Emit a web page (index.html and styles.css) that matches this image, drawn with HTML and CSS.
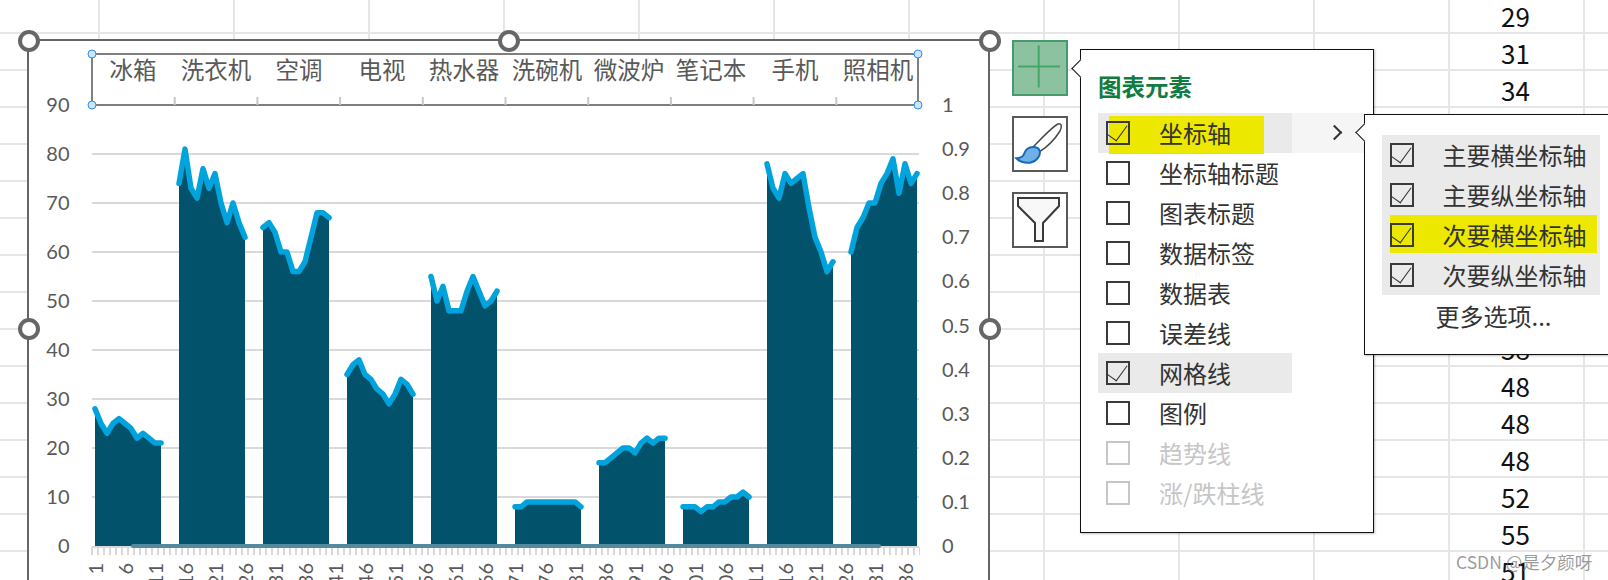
FILE: index.html
```html
<!DOCTYPE html>
<html lang="zh-CN">
<head>
  <meta charset="UTF-8">
  <title>图表元素</title>
  <link rel="stylesheet" href="styles.css">
</head>
<body>
  <div class="sheet">
    <div class="num-col">
      <div class="num">29</div>
      <div class="num">31</div>
      <div class="num">34</div>
      <div class="num"></div>
      <div class="num"></div>
      <div class="num"></div>
      <div class="num"></div>
      <div class="num"></div>
      <div class="num"></div>
      <div class="num">58</div>
      <div class="num">48</div>
      <div class="num">48</div>
      <div class="num">48</div>
      <div class="num">52</div>
      <div class="num">55</div>
      <div class="num">51</div>
    </div>

    <!-- 图表 -->
    <div class="chart">
      <svg id="plot" class="plot" viewBox="29 41 959 539" width="959" height="539"></svg>
      <span class="handle h-tl"></span>
      <span class="handle h-tc"></span>
      <span class="handle h-tr"></span>
      <span class="handle h-ml"></span>
      <span class="handle h-mr"></span>
    </div>

    <!-- 右侧三个按钮 -->
    <div class="tools">
      <div class="tool tool-on">
        <svg width="52" height="52" viewBox="0 0 52 52"><path class="plus" d="M4 24.5H46M24.7 3.5V45.5"/></svg>
      </div>
      <div class="tool">
        <svg width="52" height="52" viewBox="0 0 52 52">
          <path class="brush-stick" d="M19 29C28 20 38 9 44 6C48 5 48 9 46 13C41 21 33 29 25.7 33.7"/>
          <path class="brush-hair" d="M19 29C13 29 11 33 10 36C9 39 6 40 2.3 40.3C6 44 12 45 16 44.7C22 44 27 38 25.7 33C25 30 22 29 19 29Z"/>
        </svg>
      </div>
      <div class="tool">
        <svg width="52" height="52" viewBox="0 0 52 52"><path class="funnel" d="M4 4H45V12L29 29V47H21V29L4 12Z"/></svg>
      </div>
    </div>

    <!-- 图表元素菜单 -->
    <div class="popup menu">
      <span class="notch notch-menu"></span>
      <h2 class="menu-title">图表元素</h2>
      <ul class="items">
        <li class="item hover">
          <span class="mark mark-main"></span>
          <span class="box checked"></span><span class="label">坐标轴</span>
          <span class="more"></span>
        </li>
        <li class="item"><span class="box"></span><span class="label">坐标轴标题</span></li>
        <li class="item"><span class="box"></span><span class="label">图表标题</span></li>
        <li class="item"><span class="box"></span><span class="label">数据标签</span></li>
        <li class="item"><span class="box"></span><span class="label">数据表</span></li>
        <li class="item"><span class="box"></span><span class="label">误差线</span></li>
        <li class="item selected"><span class="box checked"></span><span class="label">网格线</span></li>
        <li class="item"><span class="box"></span><span class="label">图例</span></li>
        <li class="item disabled"><span class="box"></span><span class="label">趋势线</span></li>
        <li class="item disabled"><span class="box"></span><span class="label">涨/跌柱线</span></li>
      </ul>
    </div>

    <!-- 坐标轴子菜单 -->
    <div class="popup submenu">
      <span class="notch notch-sub"></span>
      <ul class="subitems">
        <li class="subitem"><span class="box checked"></span><span class="label">主要横坐标轴</span></li>
        <li class="subitem"><span class="box checked"></span><span class="label">主要纵坐标轴</span></li>
        <li class="subitem">
          <span class="mark mark-sub"></span>
          <span class="box checked"></span><span class="label">次要横坐标轴</span>
        </li>
        <li class="subitem"><span class="box checked"></span><span class="label">次要纵坐标轴</span></li>
      </ul>
      <div class="more-options">更多选项...</div>
    </div>

    <div class="watermark">CSDN @是夕颜呀</div>
  </div>
  <script src="chart.js"></script>
</body>
</html>
```

FILE: styles.css
```css
* {
  box-sizing: border-box;
}

body {
  margin: 0;
  background: #fff;
  font-family: "Noto Sans CJK SC", "Liberation Sans", sans-serif;
}

.sheet {
  position: relative;
  width: 1608px;
  height: 580px;
  overflow: hidden;
  padding-left: 1448px;
  background-color: #fff;
  background-image:
    linear-gradient(to right, #e6e6e6 2px, transparent 2px),
    linear-gradient(to bottom, #e6e6e6 2px, transparent 2px);
  background-size: 135px 37px;
  background-position: 98px 0, 0 32px;
}

/* 单元格里的数字 */
.num-col {
  width: 135px;
  margin-top: -5px;
}

.num {
  height: 37px;
  padding-top: 2px;
  font-family: "Noto Sans CJK SC", "Liberation Sans", sans-serif;
  font-size: 26px;
  line-height: 37px;
  text-align: center;
  color: #111;
}

/* 图表 */
.chart {
  position: absolute;
  left: 27px;
  top: 39px;
  width: 963px;
  height: 600px;
  border: 2px solid #666;
  background: #fff;
}

.plot {
  display: block;
}

.handle {
  position: absolute;
  width: 22px;
  height: 22px;
  border: 4.5px solid #666;
  border-radius: 50%;
  background: #fff;
}

.h-tl { left: -11px; top: -11px; }
.h-tc { left: 469px; top: -11px; }
.h-tr { left: 950px; top: -11px; }
.h-ml { left: -11px; top: 277px; }
.h-mr { left: 950px; top: 277px; }

.grid-line {
  stroke: #d9d9d9;
  stroke-width: 2;
}

.area {
  fill: #02526c;
}

.line {
  fill: none;
  stroke: #00a3dc;
  stroke-width: 5.5;
  stroke-linecap: round;
  stroke-linejoin: round;
}

.axis-num {
  font-family: Lato, "Liberation Sans", sans-serif;
  font-size: 20px;
  fill: #595959;
}

.axis-cat {
  font-family: "Noto Sans CJK SC", sans-serif;
  font-size: 23.5px;
  fill: #595959;
  text-anchor: middle;
}

.top-axis {
  fill: none;
  stroke: #7f7f7f;
  stroke-width: 2;
}

.top-tick {
  stroke: #c8c8c8;
  stroke-width: 2;
}

.low-axis {
  stroke: #d9d9d9;
  stroke-width: 2;
}

.low-ticks {
  stroke: #d9d9d9;
  stroke-width: 8;
  stroke-dasharray: 2 4;
}

.sec-axis {
  stroke: #54899f;
  stroke-width: 4;
  stroke-linecap: round;
}

.dot {
  fill: #cfe5f9;
  stroke: #2a8fe6;
  stroke-width: 1;
}

/* 右侧按钮 */
.tools {
  position: absolute;
  left: 1012px;
  top: 40px;
  display: flex;
  flex-direction: column;
  gap: 20px;
}

.tool {
  width: 56px;
  height: 56px;
  border: 2px solid #595959;
  background: #fff;
}

.tool svg {
  display: block;
}

.tool-on {
  border-color: #469a6c;
  background: #8cc2a0;
}

.plus {
  fill: none;
  stroke: #42a766;
  stroke-width: 2;
}

.brush-stick {
  fill: #fff;
  stroke: #4a4a4a;
  stroke-width: 1.5;
}

.brush-hair {
  fill: #6fb0e6;
  stroke: #1669b5;
  stroke-width: 2;
}

.funnel {
  fill: #f8f8f8;
  stroke: #3a3a3a;
  stroke-width: 2;
}

/* 弹出菜单 */
.popup {
  position: absolute;
  background: #fff;
  border: 1.5px solid #111;
  box-shadow: 1px 1px 2px rgba(0, 0, 0, .25);
  color: #333;
}

.notch {
  position: absolute;
  width: 13px;
  height: 13px;
  background: #fff;
  border-left: 1.5px solid #111;
  border-bottom: 1.5px solid #111;
  transform: rotate(45deg);
}

.menu {
  left: 1080px;
  top: 49px;
  width: 294px;
  height: 484px;
  padding: 16px 9px 0 17px;
}

.notch-menu {
  left: -7.5px;
  top: 12px;
}

.menu-title {
  margin: 0 0 1px;
  height: 46px;
  font-size: 23.5px;
  line-height: 40px;
  font-weight: 700;
  color: #107c41;
}

.items,
.subitems {
  margin: 0;
  padding: 0;
  list-style: none;
}

.item {
  position: relative;
  display: flex;
  align-items: center;
  width: 194px;
  height: 40px;
  padding-left: 8px;
}

.hover {
  width: 266px;
  background: linear-gradient(to right, #eaeaea 194px, #f5f5f5 194px);
}

.selected {
  background: #eaeaea;
}

.box {
  position: relative;
  flex: none;
  width: 24px;
  height: 24px;
  border: 2px solid #3a3a3a;
}

.checked::after {
  content: "";
  position: absolute;
  left: 4px;
  top: -2px;
  width: 10px;
  height: 18px;
  border-right: 1.5px solid #333;
  border-bottom: 1.5px solid #333;
  transform: rotate(36deg);
}

.label {
  position: relative;
  margin-left: 29px;
  font-size: 24px;
  line-height: 40px;
  white-space: nowrap;
}

.disabled .box {
  border-color: #c6c6c6;
}

.disabled .label {
  color: #c6c6c6;
}

.mark {
  position: absolute;
  background: #ece800;
}

.mark-main {
  left: 11px;
  top: 3px;
  width: 155px;
  height: 38px;
}

.more {
  position: absolute;
  left: 231px;
  top: 14px;
  width: 11px;
  height: 11px;
  border-top: 2px solid #333;
  border-right: 2px solid #333;
  transform: rotate(45deg);
}

.submenu {
  left: 1364px;
  top: 114px;
  width: 260px;
  height: 241px;
  padding: 19.5px 0 0 16.5px;
}

.notch-sub {
  left: -7.5px;
  top: 11px;
}

.subitems {
  width: 218px;
  background: #eaeaea;
}

.subitem {
  position: relative;
  display: flex;
  align-items: center;
  height: 40px;
  padding-left: 8px;
}

.mark-sub {
  left: 8px;
  top: 0;
  width: 207px;
  height: 38px;
}

.more-options {
  width: 224px;
  margin-top: 1px;
  font-size: 24px;
  line-height: 40px;
  text-align: center;
}

.watermark {
  position: absolute;
  left: 1456px;
  top: 549px;
  font-size: 17.5px;
  line-height: 26px;
  color: rgba(110, 110, 110, .7);
  white-space: nowrap;
}
```

FILE: chart.js
```js
// 每组 12 个点，相邻两组之间隔 14 个类别
var groups = [
  [28, 25, 23, 25, 26, 25, 24, 22, 23, 22, 21, 21],
  [74, 81, 73, 71, 77, 73, 76, 70, 66, 70, 66, 63],
  [65, 66, 64, 60, 60, 56, 56, 58, 63, 68, 68, 67],
  [35, 37, 38, 35, 34, 32, 31, 29, 31, 34, 33, 31],
  [55, 50, 53, 48, 48, 48, 52, 55, 52, 49, 50, 52],
  [8, 8, 9, 9, 9, 9, 9, 9, 9, 9, 9, 8],
  [17, 17, 18, 19, 20, 20, 19, 21, 22, 21, 22, 22],
  [8, 8, 8, 7, 8, 8, 9, 9, 10, 10, 11, 10],
  [78, 73, 71, 76, 74, 75, 76, 69, 63, 60, 56, 58],
  [60, 65, 67, 70, 70, 74, 76, 79, 72, 78, 74, 76]
];
var cats = [
  ["冰箱", 133], ["洗衣机", 216], ["空调", 299], ["电视", 382], ["热水器", 464],
  ["洗碗机", 547], ["微波炉", 629], ["笔记本", 711], ["手机", 795], ["照相机", 878]
];
var plot = document.getElementById("plot");

function add(tag, cls, attrs, text) {
  var el = document.createElementNS("http://www.w3.org/2000/svg", tag);
  el.setAttribute("class", cls);
  for (var k in attrs) el.setAttribute(k, attrs[k]);
  if (text !== undefined) el.textContent = text;
  plot.appendChild(el);
}

function yOf(v) {
  return 546 - v * 4.9;
}

// 主纵坐标轴和网格线
for (var v = 0; v <= 90; v += 10) {
  if (v > 0 && v < 90) {
    add("line", "grid-line", { x1: 92, x2: 919, y1: yOf(v), y2: yOf(v) });
  }
  add("text", "axis-num", { x: 69.5, y: yOf(v) + 7, "text-anchor": "end" }, v);
}

// 次纵坐标轴
for (var i = 0; i <= 10; i++) {
  add("text", "axis-num", { x: 942, y: 546 - i * 44.1 + 7 }, i === 10 ? 1 : i === 0 ? 0 : (i / 10).toFixed(1));
}

// 面积和折线
groups.forEach(function(vals, g) {
  var x0 = 95 + g * 84;
  var pts = vals.map(function(val, i) {
    return (x0 + i * 6) + "," + yOf(val);
  }).join(" ");
  add("polygon", "area", { points: x0 + ",546 " + pts + " " + (x0 + 66) + ",546" });
  add("polyline", "line", { points: pts });
});

// 下面的横坐标轴
add("line", "low-axis", { x1: 92, x2: 919, y1: 547, y2: 547 });
add("line", "low-ticks", { x1: 91, x2: 920, y1: 551, y2: 551 });
add("line", "sec-axis", { x1: 133, x2: 879, y1: 546, y2: 546 });
for (var n = 1; n <= 136; n += 5) {
  var tx = 95 + (n - 1) * 6 + 8;
  add("text", "axis-num", { x: tx, y: 563, "text-anchor": "end", transform: "rotate(-90 " + tx + " 563)" }, n);
}

// 次要横坐标轴（上面）
add("rect", "top-axis", { x: 92, y: 54, width: 826, height: 51 });
for (var t = 1; t < 10; t++) {
  var lx = 92 + t * 82.7;
  add("line", "top-tick", { x1: lx, x2: lx, y1: 97, y2: 105 });
}
cats.forEach(function(c) {
  add("text", "axis-cat", { x: c[1], y: 79 }, c[0]);
});
[[92, 54], [918, 54], [92, 105], [918, 105]].forEach(function(p) {
  add("circle", "dot", { cx: p[0], cy: p[1], r: 4 });
});
```
